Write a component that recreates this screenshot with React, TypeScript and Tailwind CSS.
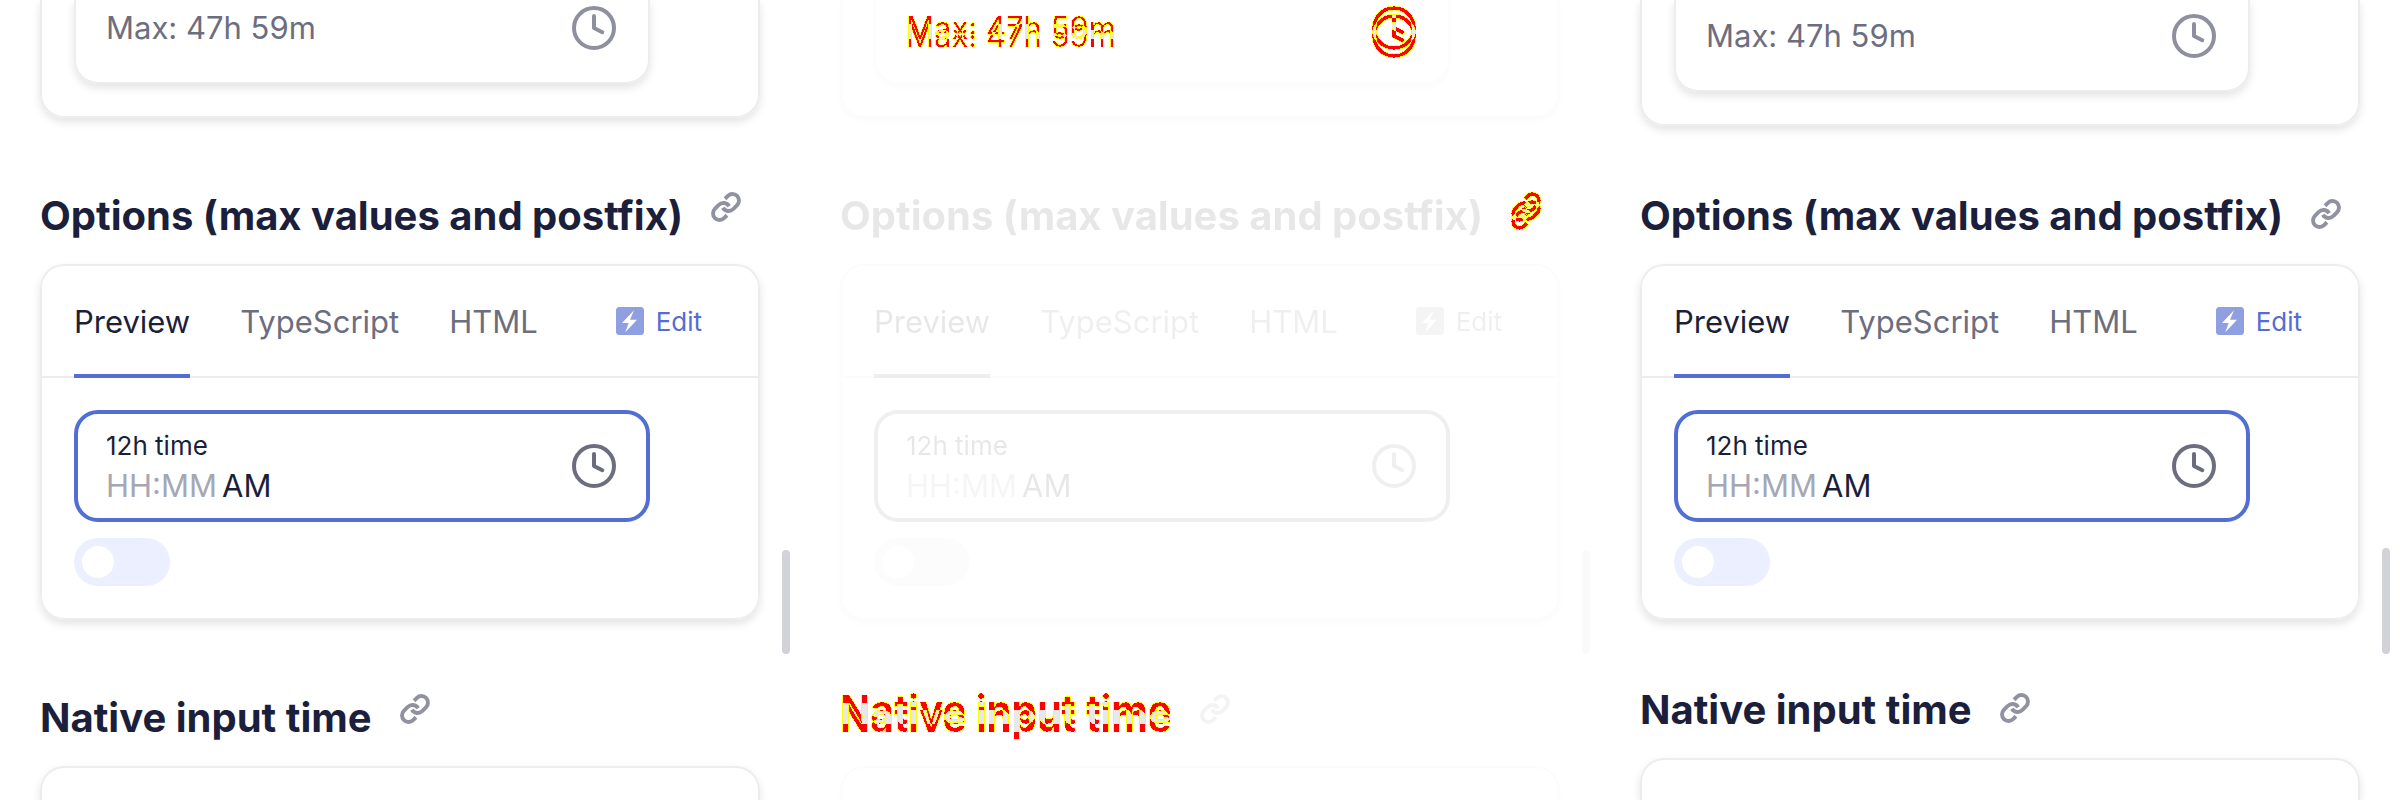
import { clsx } from "clsx";

type Variant = "before" | "diff" | "after";

const CARD_SHADOW = "shadow-[0_4px_8px_rgba(0,0,0,0.11)]";
const CARD_SHADOW_FAINT = "shadow-[0_4px_6px_rgba(0,0,0,0.015)]";

/** Paints an element against a vertically shifted copy of itself: red where only one
 *  copy is present, yellow along smooth edges and light grey where both overlap. */
function DiffFilter({ id, dy }: { id: string; dy: number }) {
  return (
    <filter id={id} x="-20%" y="-100%" width="140%" height="300%" colorInterpolationFilters="sRGB">
      <feOffset in="SourceAlpha" dy={dy} result="moved" />
      <feComposite in="SourceAlpha" in2="moved" operator="xor" result="changed" />
      <feComposite in="SourceAlpha" in2="moved" operator="in" result="same" />
      <feComponentTransfer in="changed" result="anyChange">
        <feFuncA type="linear" slope="100" intercept="-6" />
      </feComponentTransfer>
      <feComponentTransfer in="changed" result="fullChange">
        <feFuncA type="linear" slope="100" intercept="-84" />
      </feComponentTransfer>
      <feFlood floodColor="#e8e8e8" />
      <feComposite in2="same" operator="in" result="grey" />
      <feFlood floodColor="#ffff00" />
      <feComposite in2="anyChange" operator="in" result="yellow" />
      <feFlood floodColor="#ff0000" />
      <feComposite in2="fullChange" operator="in" result="red" />
      <feMerge>
        <feMergeNode in="grey" />
        <feMergeNode in="yellow" />
        <feMergeNode in="red" />
      </feMerge>
    </filter>
  );
}

function ClockIcon({ className }: { className?: string }) {
  return (
    <svg
      viewBox="0 0 44 44"
      className={clsx("size-11 shrink-0", className)}
      fill="none"
      stroke="currentColor"
      strokeWidth="4"
      strokeLinecap="round"
      strokeLinejoin="round"
      aria-hidden="true"
    >
      <circle cx="22" cy="22" r="20" />
      <path d="M22 10v12l8.3 4.2" />
    </svg>
  );
}

function LinkIcon() {
  return (
    <svg
      viewBox="0.5 0.5 23 23"
      className="size-[30px]"
      fill="none"
      stroke="currentColor"
      strokeWidth="3"
      strokeLinecap="butt"
      strokeLinejoin="round"
      aria-hidden="true"
    >
      <path d="M9.6 12.6a5 5 0 0 0 7.94.94l3-3a5 5 0 0 0-7.07-7.07l-2.2 2.2" />
      <path d="M14.4 11.4a5 5 0 0 0-7.94-.94l-3 3a5 5 0 0 0 7.07 7.07l2.2-2.2" />
    </svg>
  );
}

function BoltIcon() {
  return (
    <svg viewBox="0 0 28 28" className="size-7" aria-hidden="true">
      <rect width="28" height="28" rx="3.5" fill="#8f9fe2" />
      <path d="M18 3.3 6 16h6.7L9.3 25.3 21 12.7h-7z" fill="#fff" />
    </svg>
  );
}

function SectionHeading({
  id,
  title,
  variant,
  titleClass,
  linkClass,
}: {
  id: string;
  title: string;
  variant: Variant;
  titleClass?: string;
  linkClass?: string;
}) {
  return (
    <div
      className={clsx(
        "mb-6 flex gap-7 whitespace-nowrap",
        variant === "after" ? "mt-[66px] items-center" : "mt-[74px] items-start",
      )}
    >
      <h2 id={id} className={clsx("text-[40px] leading-[48px] font-bold text-[#1b1f3b]", titleClass)}>
        {title}
      </h2>
      <a
        href={"#" + id}
        aria-labelledby={id}
        className={clsx("block text-[#9192a1]", variant === "after" && "pb-1", linkClass)}
      >
        <LinkIcon />
      </a>
    </div>
  );
}

function Panel({ variant }: { variant: Variant }) {
  const diff = variant === "diff";
  const faded = diff && "opacity-10 grayscale";
  const cardBorder = diff ? clsx("border-[#fcfcfc]", CARD_SHADOW_FAINT) : clsx("border-[#ededed]", CARD_SHADOW);

  return (
    <section className="relative flex min-h-screen flex-col overflow-hidden px-10">
      <div className={clsx("rounded-b-[24px] border-x-2 border-b-2 px-8 pb-8", cardBorder)}>
        <div
          className={clsx(
            "flex w-[576px] max-w-full items-center justify-between rounded-b-[24px] border-x-2 border-b-2 pr-8 pb-8 pl-[30px]",
            variant === "after" ? "pt-[14px]" : "pt-[6px]",
            cardBorder,
          )}
        >
          <input
            type="text"
            aria-label="Max"
            placeholder="Max: 47h 59m"
            className={clsx(
              "h-10 w-60 bg-transparent text-[31px] leading-10 outline-none placeholder:text-[#6c6e80] placeholder:opacity-100",
              diff && "[filter:url(#diff-down)]",
            )}
          />
          <ClockIcon className={clsx("text-[#8e909f]", diff && "overflow-visible [filter:url(#diff-down)]")} />
        </div>
      </div>

      <SectionHeading
        id={variant + "-options"}
        title="Options (max values and postfix)"
        variant={variant}
        titleClass={clsx(faded)}
        linkClass={clsx(diff && "[filter:url(#diff-down)]")}
      />

      <div className={clsx("rounded-[24px] border-2", cardBorder)}>
        <div className={clsx("flex h-28 items-stretch border-b-2 pr-14 pl-8", diff ? "border-[#fcfcfc]" : "border-[#ededed]")}>
          <div role="tablist" className={clsx("-mb-0.5 flex gap-[50px] text-[31px] leading-10 text-[#6c6e80]", faded)}>
            <button type="button" role="tab" aria-selected="true" className="border-y-4 border-t-transparent border-b-[#526ed3] text-[#1b1f3b]">
              Preview
            </button>
            <button type="button" role="tab" aria-selected="false" className="border-y-4 border-transparent">
              TypeScript
            </button>
            <button type="button" role="tab" aria-selected="false" className="border-y-4 border-transparent">
              HTML
            </button>
          </div>
          <button type="button" className={clsx("ml-auto flex items-center gap-3 text-[26px] text-[#526ed3]", faded)}>
            <BoltIcon />
            Edit
          </button>
        </div>

        <div className="flex flex-col items-start gap-4 p-8">
          <div
            className={clsx(
              "flex w-[576px] max-w-full items-center justify-between rounded-[24px] border-4 border-[#526ed3] py-3 pr-[30px] pl-7",
              faded,
            )}
          >
            <div className="flex flex-col text-[#1b1f3b]">
              <label htmlFor={variant + "-time"} className="text-[26px] leading-10">
                12h time
              </label>
              <div className="flex gap-1 text-[31px] leading-10">
                <input
                  id={variant + "-time"}
                  type="text"
                  placeholder="HH:MM"
                  className="h-10 w-[112px] bg-transparent leading-10 outline-none placeholder:text-[#a6a7b2] placeholder:opacity-100"
                />
                <span>AM</span>
              </div>
            </div>
            <ClockIcon className="text-[#6c6e80]" />
          </div>
          <input
            type="checkbox"
            role="switch"
            aria-label="Postfix"
            className={clsx(
              "h-12 w-24 appearance-none rounded-full bg-[#ebefff] p-2 before:block before:size-8 before:rounded-full before:bg-white",
              diff && "opacity-15 grayscale",
            )}
          />
        </div>
      </div>

      <SectionHeading
        id={variant + "-native"}
        title="Native input time"
        variant={variant}
        titleClass={clsx(diff && "[filter:url(#diff-up)]")}
        linkClass={clsx(faded)}
      />

      <div className={clsx("grow rounded-t-[24px] border-x-2 border-t-2", cardBorder)} />

      <div
        className={clsx(
          "absolute right-[10px] w-2 rounded-full",
          variant === "after" ? "top-[548px] h-[106px]" : "top-[550px] h-[104px]",
          diff ? "bg-[#fafafa]" : "bg-[#d2d2d9]",
        )}
      />
    </section>
  );
}

export default function App() {
  return (
    <main className="grid min-h-screen grid-cols-3 bg-white font-['Inter',sans-serif]">
      <svg className="absolute size-0" aria-hidden="true">
        <DiffFilter id="diff-down" dy={8} />
        <DiffFilter id="diff-up" dy={-8} />
      </svg>
      <Panel variant="before" />
      <Panel variant="diff" />
      <Panel variant="after" />
    </main>
  );
}
